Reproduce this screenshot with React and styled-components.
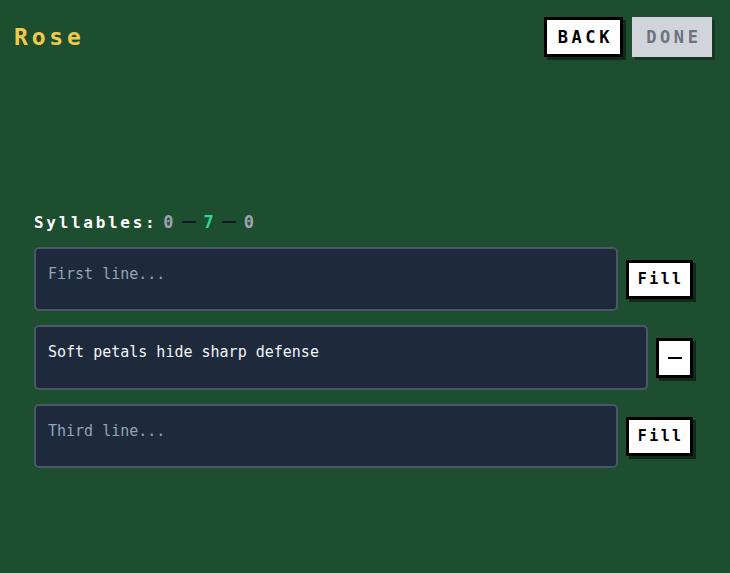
import React from "react";
import styled, { createGlobalStyle } from "styled-components";

const GlobalStyle = createGlobalStyle`
  body {
    margin: 0;
    background-color: #1d4e30;
  }
`;

const PageStyled = styled.div`
  min-height: 100vh;
  background-color: #1d4e30;
  font-family: "DejaVu Sans Mono", monospace;
`;

const HeaderStyled = styled.header`
  display: flex;
  align-items: center;
  justify-content: space-between;
  padding: 17px 18px 0 14px;
`;

const TitleStyled = styled.h1`
  margin: 0;
  font-family: "DejaVu Sans Mono", monospace;
  font-weight: bold;
  font-size: 23px;
  letter-spacing: 3.8px;
  color: #f2c94c;
`;

const HeaderButtons = styled.div`
  display: flex;
  gap: 9px;
`;

// chunky pixel-style buttons with a hard drop shadow
const PixelButton = styled.button`
  box-sizing: border-box;
  display: flex;
  align-items: center;
  justify-content: center;
  width: ${(p) => p.$width}px;
  height: ${(p) => p.$height || 40}px;
  padding: 0;
  border: 3px solid ${(p) => (p.$disabled ? "#d1d5db" : "#000000")};
  background-color: ${(p) => (p.$disabled ? "#d1d5db" : "#ffffff")};
  color: ${(p) => (p.$disabled ? "#6b7280" : "#000000")};
  box-shadow: 3px 3px 0 ${(p) => (p.$disabled ? "rgba(0, 0, 0, 0.25)" : "rgba(0, 0, 0, 0.45)")};
  font-family: "DejaVu Sans Mono", monospace;
  font-weight: bold;
  font-size: ${(p) => p.$size || 17}px;
  letter-spacing: ${(p) => p.$spacing || 0}px;
  text-indent: ${(p) => p.$spacing || 0}px;
  cursor: pointer;
  flex-shrink: 0;
`;

const MainStyled = styled.main`
  padding: 155px 37px 0 34px;
`;

const SyllableRow = styled.div`
  display: flex;
  align-items: center;
  gap: 8px;
  margin-bottom: 15px;
  font-weight: bold;
  font-size: 16px;
`;

const SyllableLabel = styled.span`
  color: #ffffff;
  letter-spacing: 2.7px;
  margin-right: -2px;
`;

const Count = styled.span`
  color: ${(p) => (p.$active ? "#34d399" : "#9ca3af")};
  font-size: 17px;
`;

const Dash = styled.span`
  display: inline-block;
  width: 14px;
  height: 2px;
  background-color: #111827;
`;

const LineRow = styled.div`
  display: flex;
  align-items: center;
  gap: 8px;
  margin-bottom: 14px;
`;

const LineInput = styled.textarea`
  box-sizing: border-box;
  flex: 1;
  height: ${(p) => p.$height || 64}px;
  padding: 14px 12px 12px;
  border: 2px solid #4a5866;
  border-radius: 5px;
  background-color: #1e293b;
  color: #f1f5f9;
  font-family: "DejaVu Sans Mono", monospace;
  font-size: 15px;
  line-height: 1.5;
  resize: none;
  outline: none;
  overflow: hidden;

  &::placeholder {
    color: #94a3b8;
  }
`;

const MinusMark = styled.span`
  display: block;
  width: 14px;
  height: 2px;
  background-color: #000000;
`;

const App = () => {
  return (
    <PageStyled>
      <GlobalStyle />
      <HeaderStyled>
        <TitleStyled>Rose</TitleStyled>
        <HeaderButtons>
          <PixelButton $width={79} $spacing={3.6}>BACK</PixelButton>
          <PixelButton $width={80} $spacing={3.6} $disabled>
            DONE
          </PixelButton>
        </HeaderButtons>
      </HeaderStyled>
      <MainStyled>
        <SyllableRow>
          <SyllableLabel>Syllables:</SyllableLabel>
          <Count>0</Count>
          <Dash />
          <Count $active>7</Count>
          <Dash />
          <Count>0</Count>
        </SyllableRow>
        <LineRow>
          <LineInput placeholder="First line..." />
          <PixelButton $width={67} $height={39} $size={15} $spacing={2.4}>
            Fill
          </PixelButton>
        </LineRow>
        <LineRow>
          <LineInput $height={65} defaultValue="Soft petals hide sharp defense" />
          <PixelButton $width={37} $height={40}>
            <MinusMark />
          </PixelButton>
        </LineRow>
        <LineRow>
          <LineInput placeholder="Third line..." />
          <PixelButton $width={67} $height={39} $size={15} $spacing={2.4}>
            Fill
          </PixelButton>
        </LineRow>
      </MainStyled>
    </PageStyled>
  );
};

export default App;
